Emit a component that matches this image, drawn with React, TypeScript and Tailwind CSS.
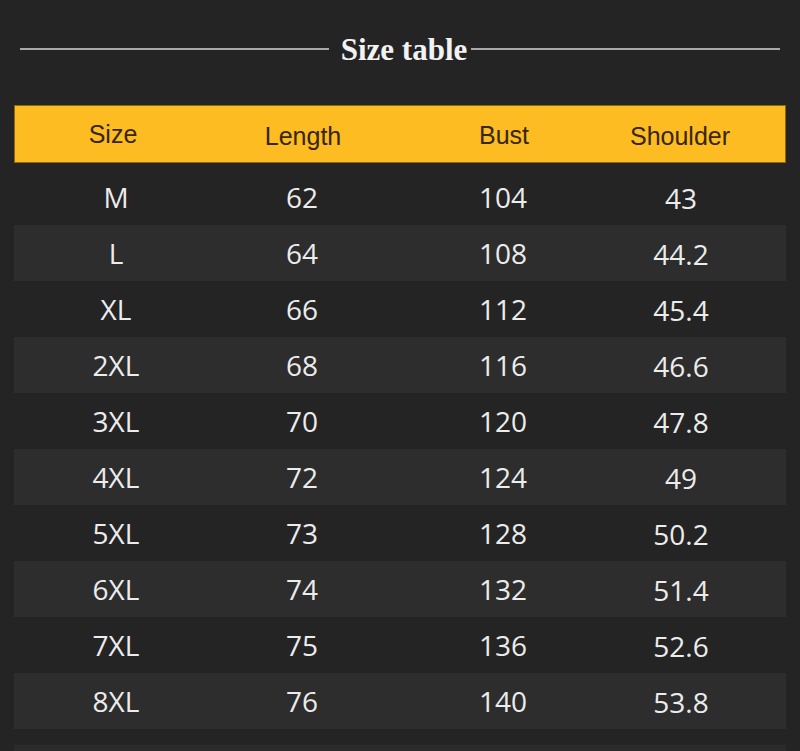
const rows: [string, string, string, string][] = [
  ["M", "62", "104", "43"],
  ["L", "64", "108", "44.2"],
  ["XL", "66", "112", "45.4"],
  ["2XL", "68", "116", "46.6"],
  ["3XL", "70", "120", "47.8"],
  ["4XL", "72", "124", "49"],
  ["5XL", "73", "128", "50.2"],
  ["6XL", "74", "132", "51.4"],
  ["7XL", "75", "136", "52.6"],
  ["8XL", "76", "140", "53.8"],
];

const cols = "grid grid-cols-[204px_168px_234px_122px]";

export default function App() {
  return (
    <div className="h-[751px] w-[800px] overflow-hidden bg-[#242424]">
      <div className="mt-[32px] flex h-[34px] items-center px-[20px]">
        <div className="h-[2px] flex-1 bg-[#a8a8a8]" />
        <h1 className="ml-[12px] mr-[4px] font-['Liberation_Serif',serif] text-[31px] font-bold leading-none text-[#f2f2f2]">
          Size table
        </h1>
        <div className="h-[2px] flex-1 bg-[#a8a8a8]" />
      </div>

      <div
        className={`${cols} mx-[14px] mt-[39px] h-[58px] items-center border border-[#8a6a10] bg-[#fcbc22] font-['Liberation_Sans',Arial,sans-serif] text-[25px] leading-none text-[#36260a]`}
      >
        <div className="pr-[8px] text-center">Size</div>
        <div className="pt-[4px] text-center">Length</div>
        <div className="pt-[2px] text-center">Bust</div>
        <div className="pt-[4px] pr-[4px] text-center">Shoulder</div>
      </div>

      <div className="mx-[14px] mt-[6px] font-['Open_Sans',sans-serif] text-[28px] leading-none text-[#ececec]">
        {rows.map((r, i) => (
          <div
            key={r[0]}
            className={`${cols} h-[56px] items-center ${i % 2 === 1 ? "bg-[#2d2d2d]" : ""}`}
          >
            {r.map((c, j) => (
              <div key={j} className={`text-center ${j === 3 ? "pt-[2px]" : ""}`}>
                {c}
              </div>
            ))}
          </div>
        ))}
      </div>

      <div className="mx-[14px] mt-[16px] h-[20px] bg-[#2b2b2b]" />
    </div>
  );
}
